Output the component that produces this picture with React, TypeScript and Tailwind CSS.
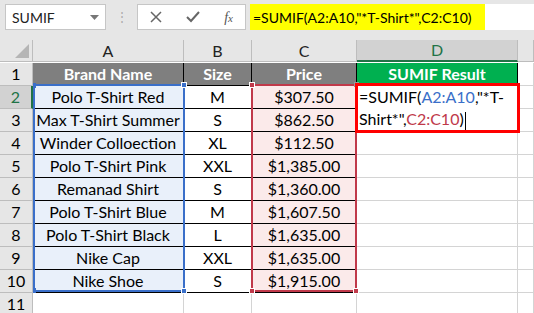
const rows = [
  ['Polo T-Shirt Red', 'M', '$307.50'],
  ['Max T-Shirt Summer', 'S', '$862.50'],
  ['Winder Colloection', 'XL', '$112.50'],
  ['Polo T-Shirt Pink', 'XXL', '$1,385.00'],
  ['Remanad Shirt', 'S', '$1,360.00'],
  ['Polo T-Shirt Blue', 'M', '$1,607.50'],
  ['Polo T-Shirt Black', 'L', '$1,635.00'],
  ['Nike Cap', 'XXL', '$1,635.00'],
  ['Nike Shoe', 'S', '$1,915.00'],
];

const cols = ['A', 'B', 'C', 'D', ''];

export default function App() {
  return (
    <div className="w-[534px] h-[313px] overflow-hidden bg-white text-[16px] text-black" style={{ fontFamily: 'Lato, "Noto Sans", sans-serif' }}>
      {/* formula bar */}
      <div className="h-[40px] bg-[#e6e6e6] flex items-start pt-[4px] pl-[5px]">
        <div className="w-[101px] h-[26px] bg-white border border-[#c6c6c6] flex items-center justify-between pl-[6px] pr-[6px] text-[14px] text-[#222]">
          <span>SUMIF</span>
          <svg width="9" height="5" viewBox="0 0 9 5"><path d="M0 0H9L4.5 5Z" fill="#777" /></svg>
        </div>
        <div className="w-[31px] h-[26px] flex items-center justify-center text-[#aaa] text-[12px] leading-none">⋮</div>
        <div className="w-[109px] h-[26px] bg-white border border-[#c6c6c6] flex items-center justify-around text-[#666]">
          <svg width="12" height="12" viewBox="0 0 12 12"><path d="M1 1L11 11M11 1L1 11" stroke="#666" strokeWidth="1.5" /></svg>
          <svg width="14" height="12" viewBox="0 0 14 12"><path d="M1 6L5 10L13 1" stroke="#666" strokeWidth="2" fill="none" /></svg>
          <span className="italic text-[14px] text-[#555]" style={{ fontFamily: '"Liberation Serif", serif' }}>f<span className="text-[11px]">x</span></span>
        </div>
        <div className="ml-[4px] flex-1 h-[26px] bg-white flex">
          <div className="w-[235px] h-full bg-[#ffff00] flex items-center pl-[3px] text-[14px]">=SUMIF(A2:A10,"*T-Shirt*",C2:C10)</div>
        </div>
      </div>

      {/* sheet */}
      <div className="relative">
        <div className="grid grid-cols-[33px_151px_68px_105px_161px_16px] auto-rows-[23px]">
          {/* corner */}
          <div className="h-[22px] bg-[#e6e6e6] border-r border-b border-[#bdbdbd] relative">
            <div className="absolute right-[3px] bottom-[3px] w-0 h-0 border-l-[14px] border-l-transparent border-b-[14px] border-b-[#b5b5b5]" />
          </div>
          {cols.map((c, i) => (
            <div key={i} className={`h-[22px] flex items-center justify-center border-r border-[#bdbdbd] ${c === 'D' ? 'bg-[#d2d2d2] border-b-2 border-b-[#217346] text-[#217346]' : 'bg-[#e6e6e6] border-b border-b-[#bdbdbd] text-[#222]'}`}>{c}</div>
          ))}

          {/* row 1 */}
          <div className="bg-[#e6e6e6] border-r border-b border-[#bdbdbd] flex items-center justify-center">1</div>
          <div className="bg-[#7f7f7f] text-white font-bold border-r border-b border-black flex items-center justify-center">Brand Name</div>
          <div className="bg-[#7f7f7f] text-white font-bold border-r border-b border-black flex items-center justify-center">Size</div>
          <div className="bg-[#7f7f7f] text-white font-bold border-r border-b border-black flex items-center justify-center">Price</div>
          <div className="bg-[#00b050] text-white font-bold border-r border-b border-black flex items-center justify-center">SUMIF Result</div>
          <div className="border-r border-b border-[#d4d4d4]" />

          {rows.map((r, i) => (
            <div key={i} className="contents">
              <div className={`border-r border-b border-[#bdbdbd] flex items-center justify-center ${i === 0 ? 'bg-[#d2d2d2] text-[#217346] border-r-2 border-r-[#217346]' : 'bg-[#e6e6e6]'}`}>{i + 2}</div>
              <div className="bg-[#e9f0fa] border-r border-b border-black flex items-center justify-center">{r[0]}</div>
              <div className="bg-white border-r border-b border-black flex items-center justify-center">{r[1]}</div>
              <div className="bg-[#fbeaea] border-r border-b border-black flex items-center justify-center">{r[2]}</div>
              <div className="border-r border-b border-[#d4d4d4]" />
              <div className="border-r border-b border-[#d4d4d4]" />
            </div>
          ))}

          {/* row 11 */}
          <div className="bg-[#e6e6e6] border-r border-b border-[#bdbdbd] flex items-center justify-center">11</div>
          {[0, 1, 2, 3, 4].map((k) => (
            <div key={k} className="border-r border-b border-[#d4d4d4]" />
          ))}
        </div>

        {/* blue range A2:A10 */}
        <div className="absolute left-[33px] top-[44px] w-[152px] h-[208px] border-2 border-[#3a6fc9] pointer-events-none">
          <div className="absolute -right-[4px] -top-[4px] w-[6px] h-[6px] bg-[#3a6fc9] border border-white" />
          <div className="absolute -right-[4px] -bottom-[4px] w-[6px] h-[6px] bg-[#3a6fc9] border border-white" />
          <div className="absolute -left-[2px] -top-[3px] w-[3px] h-[5px] bg-[#3a6fc9]" />
          <div className="absolute -left-[2px] -bottom-[3px] w-[3px] h-[5px] bg-[#3a6fc9]" />
        </div>

        {/* red range C2:C10 */}
        <div className="absolute left-[251px] top-[44px] w-[106px] h-[208px] border-2 border-[#c0394a] pointer-events-none">
          <div className="absolute -left-[4px] -top-[4px] w-[6px] h-[6px] bg-[#c0394a] border border-white" />
          <div className="absolute -right-[4px] -bottom-[4px] w-[6px] h-[6px] bg-[#c0394a] border border-white" />
          <div className="absolute -left-[4px] -bottom-[4px] w-[6px] h-[6px] bg-[#c0394a] border border-white" />
          <div className="absolute -right-[4px] -top-[4px] w-[5px] h-[5px] bg-white border border-[#999]" />
        </div>

        {/* editing cell D2 */}
        <div className="absolute left-[355px] top-[43px] w-[165px] h-[50px] border-[3px] border-[#ff0000] bg-white pl-[1px] leading-[22px]">
          <span>=SUMIF(</span><span className="text-[#3a6fc9]">A2:A10</span><span>,"*T-</span>
          <br />
          <span>Shirt*",</span><span className="text-[#c0394a]">C2:C10</span><span>)</span><span className="inline-block w-px h-[18px] bg-black align-middle ml-[1px]" />
        </div>
      </div>
    </div>
  );
}
